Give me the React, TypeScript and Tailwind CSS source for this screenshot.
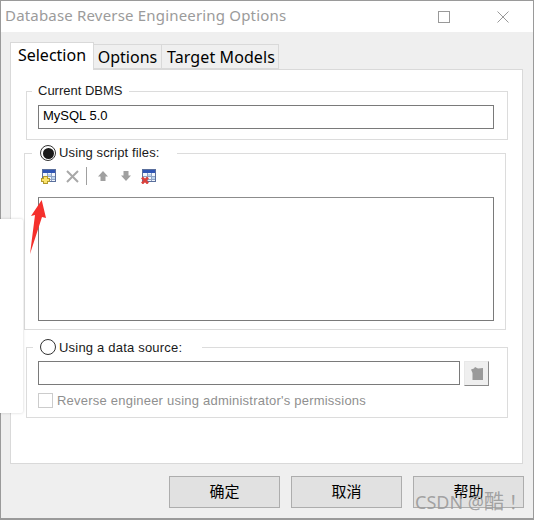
import React from "react";

const sans = "font-['Liberation_Sans',sans-serif]";
const yahei = "font-['Noto_Sans','Noto_Sans_CJK_SC',sans-serif]";

function TableIcon({ mark }: { mark: "plus" | "x" }) {
  return (
    <svg width="15" height="15" viewBox="0 0 15 15" shapeRendering="crispEdges">
      <rect x="1.5" y="0.5" width="13" height="12" fill="#f2f6fc" stroke="#5a6f9c" />
      <rect x="2" y="1" width="12" height="3" fill="#2f55b5" />
      <path d="M2 7.5h12M2 10.5h12M6.5 4v8M10.5 4v8" stroke="#8fa3c4" />
      <rect x="7" y="5" width="3" height="2" fill="#bcd3ee" />
      <rect x="11" y="8" width="3" height="2" fill="#bcd3ee" />
      {mark === "plus" ? (
        <g>
          <rect x="2" y="7" width="5" height="8" fill="#b39a2e" />
          <rect x="0" y="9" width="9" height="4" fill="#b39a2e" />
          <rect x="3" y="8" width="3" height="6" fill="#fbe36a" />
          <rect x="1" y="10" width="7" height="2" fill="#fbe36a" />
        </g>
      ) : (
        <g shapeRendering="auto">
          <path d="M1 8.500L7 14.500M7 8.500L1 14.500" stroke="#d9413c" strokeWidth="2.6" />
        </g>
      )}
    </svg>
  );
}

function Arrow({ down }: { down?: boolean }) {
  return (
    <svg width="10" height="10" viewBox="0 0 10 10" className={down ? "rotate-180" : ""}>
      <path d="M5 0L10 5.500H7.500V10H2.500V5.500H0z" fill="#a0a0a0" />
    </svg>
  );
}

function Radio({ checked }: { checked?: boolean }) {
  return (
    <span className="w-4 h-4 rounded-full border border-[#333333] bg-white flex items-center justify-center shrink-0">
      {checked && <span className="w-[11px] h-[11px] rounded-full bg-[#1a1a1a]" />}
    </span>
  );
}

function DialogButton({ children }: { children: React.ReactNode }) {
  return (
    <button className={`w-[111px] h-[32px] pb-[2px] bg-[#e1e1e1] border border-[#adadad] text-[15px] text-black ${yahei}`}>
      {children}
    </button>
  );
}

export default function App() {
  return (
    <div className="relative w-[534px] h-[521px] overflow-hidden bg-white">
      <div className="h-[520px] flex flex-col border border-[#9a9a9a] border-b-2 bg-[#efefef]">
        {/* title bar */}
        <div className="h-[31px] shrink-0 bg-white flex items-center">
          <span className={`ml-[4px] mb-[2px] text-[15px] leading-none text-[#9b9b9b] tracking-[0.18px] ${yahei}`}>
            Database Reverse Engineering Options
          </span>
          <div className="ml-auto flex items-center">
            <svg width="12" height="12" viewBox="0 0 12 12" className="mr-[47px]" shapeRendering="crispEdges">
              <rect x="0.5" y="0.5" width="11" height="11" fill="none" stroke="#999999" />
            </svg>
            <svg width="12" height="12" viewBox="0 0 12 12" className="mr-[24px]">
              <path d="M0.5 0.5L11.5 11.5M11.5 0.5L0.5 11.5" stroke="#999999" strokeWidth="1" />
            </svg>
          </div>
        </div>

        {/* tabs */}
        <div className={`ml-[9px] mt-[10px] h-[27px] flex items-end relative z-10 text-[16px] leading-none text-black ${yahei}`}>
          <div className="w-[84px] h-[28px] -mb-px bg-white border border-[#d9d9d9] border-b-0 flex items-center justify-center pb-[3px]">
            Selection
          </div>
          <div className="w-[68px] h-[25px] bg-[#efefef] border border-[#d9d9d9] border-l-0 flex items-center justify-center">
            Options
          </div>
          <div className="w-[117px] h-[25px] pl-[2px] bg-[#efefef] border border-[#d9d9d9] border-l-0 flex items-center justify-center tracking-[0.1px]">
            Target Models
          </div>
        </div>

        {/* panel */}
        <div className={`ml-[9px] w-[513px] h-[395px] bg-white border border-[#d9d9d9] px-[15px] pt-[14px] text-[13px] text-[#1a1a1a] ${sans}`}>
          <fieldset className="w-[482px] h-[56px] border border-[#dcdcdc] pl-[11px] pr-[13px]">
            <legend className="ml-[-6px] pl-[6px] pr-[6px] h-[14px] leading-[14px] text-[13px]">Current DBMS</legend>
            <div className="h-[24px] mt-[7px] border border-[#7a7a7a] pl-[4px] leading-[20px] text-[13px] text-black">MySQL 5.0</div>
          </fieldset>

          <fieldset className="mt-[5px] ml-[-2px] w-[482px] h-[185px] border border-[#dcdcdc] pl-[13px] pr-[11px]">
            <legend className="ml-[-6px] pl-[8px] pr-[17px] h-[16px] flex items-center gap-[3px] text-[13px] tracking-[0.12px] whitespace-nowrap">
              <Radio checked />
              <span>Using script files:</span>
            </legend>
            <div className="h-[22px] mt-[4px] pl-[3px] flex items-center">
              <TableIcon mark="plus" />
              <svg width="13" height="13" viewBox="0 0 13 13" className="ml-[10px]">
                <path d="M1 1L12 12M12 1L1 12" stroke="#a8a8a8" strokeWidth="2" />
              </svg>
              <span className="ml-[7px] w-px h-[18px] bg-[#a0a0a0]" />
              <span className="ml-[11px] flex"><Arrow /></span>
              <span className="ml-[13px] flex"><Arrow down /></span>
              <span className="ml-[10px] flex"><TableIcon mark="x" /></span>
            </div>
            <div className="mt-[10px] h-[124px] border border-[#7a7a7a] border-t-[#8c8c8c]" />
          </fieldset>

          <fieldset className="mt-[9px] w-[482px] h-[79px] border border-[#dcdcdc] px-[11px]">
            <legend className="ml-[-5px] pl-[7px] pr-[20px] h-[16px] flex items-center gap-[3px] text-[13px] tracking-[0.2px] whitespace-nowrap">
              <Radio />
              <span className="pt-[1px]">Using a data source:</span>
            </legend>
            <div className="mt-[6px] flex">
              <div className="w-[422px] h-[24px] border border-[#7a7a7a]" />
              <div className="ml-[4px] w-[25px] h-[25px] bg-[#efefef] border border-[#8a8a8a] border-t-[#e8e8e8] border-l-[#e8e8e8] flex items-center justify-center">
                <svg width="12" height="13" viewBox="0 0 12 13">
                  <path d="M0 2.500L3 1.500L4 0L7 1.500L12 1V13H1.500V6z" fill="#9a9a9a" />
                </svg>
              </div>
            </div>
            <div className="mt-[5px] flex items-center">
              <span className="w-[15px] h-[15px] border border-[#cccccc] shrink-0" />
              <span className="ml-[4px] text-[#8f8f8f] text-[13px] tracking-[0.22px]">Reverse engineer using administrator's permissions</span>
            </div>
          </fieldset>
        </div>

        {/* dialog buttons */}
        <div className="ml-[168px] mt-[12px] flex gap-[11px]">
          <DialogButton>确定</DialogButton>
          <DialogButton>取消</DialogButton>
          <DialogButton>帮助</DialogButton>
        </div>
      </div>

      {/* overlapping white sheet */}
      <div className="absolute left-0 top-[219px] w-[23px] h-[194px] bg-white rounded-r-[2px] shadow-[0_0_3px_rgba(0,0,0,0.18)]" />

      {/* red annotation arrow */}
      <svg className="absolute left-[28px] top-[198px]" width="20" height="58" viewBox="0 0 20 58">
        <path d="M13.700 2L18 20L14 19L2 56L7 17L3 18z" fill="#f5302c" />
      </svg>

      {/* watermark */}
      <span className={`absolute left-[415px] top-[491px] text-[18px] leading-[22px] text-[#9a9a9a]/90 whitespace-nowrap ${yahei}`}>
        CSDN @<span className="text-[20px]">酷</span> ！
      </span>
    </div>
  );
}
